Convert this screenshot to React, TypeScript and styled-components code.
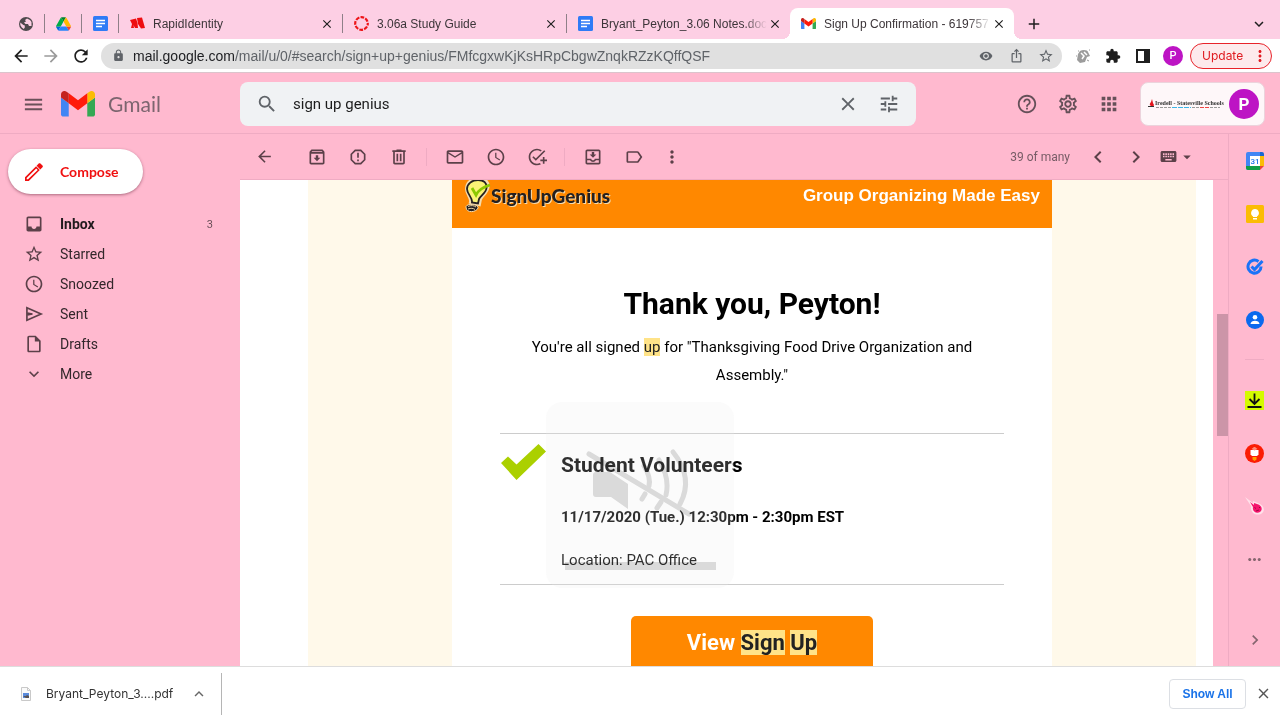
import React from "react";
import styled, { createGlobalStyle } from "styled-components";
import {
  MdAdd,
  MdAddTask,
  MdApps,
  MdArrowBack,
  MdArrowDropDown,
  MdArrowForward,
  MdChevronLeft,
  MdChevronRight,
  MdClose,
  MdExpandMore,
  MdExtension,
  MdHelpOutline,
  MdInbox,
  MdIosShare,
  MdKeyboard,
  MdKeyboardArrowUp,
  MdLock,
  MdMenu,
  MdMoreHoriz,
  MdMoreVert,
  MdOutlineArchive,
  MdOutlineEmail,
  MdOutlineInsertDriveFile,
  MdOutlineLabel,
  MdOutlineMoveToInbox,
  MdOutlineSettings,
  MdRefresh,
  MdRemoveRedEye,
  MdReportGmailerrorred,
  MdSchedule,
  MdSearch,
  MdStarBorder,
  MdTune,
} from "react-icons/md";

const color = {
  frame: "#fdcfe4",
  pink: "#ffb9cf",
  line: "#efabc3",
  icon: "#5c4049",
  grey: "#5f6368",
  text: "#33272b",
  orange: "#ff8800",
  cream: "#fff9ea",
  mark: "#ffe388",
  purple: "#bd14c4",
  red: "#f01010",
};

const ui = `Inter, "Liberation Sans", sans-serif`;
const arial = `"Liberation Sans", Arial, sans-serif`;
const roboto = `Roboto, "Liberation Sans", sans-serif`;

const GlobalStyle = createGlobalStyle`
  *, *::before, *::after { box-sizing: border-box; }
  body { margin: 0; font-family: ${roboto}; color: ${color.text}; }
  button { font: inherit; color: inherit; background: none; border: 0; padding: 0; cursor: pointer; }
  a { color: inherit; text-decoration: none; }
  svg { display: block; flex: none; }
  h1, h2, p, ul { margin: 0; padding: 0; }
  ul { list-style: none; }
`;

const Window = styled.div`
  position: relative;
  display: flex;
  flex-direction: column;
  height: 100vh;
  overflow: hidden;
  background: ${color.pink};
`;

/* ---------- browser chrome ---------- */

const TabStrip = styled.div`
  display: flex;
  align-items: flex-end;
  flex: none;
  padding: 8px 8px 0;
  background: ${color.frame};
  font-family: ${arial};
`;

const PinnedTab = styled.button`
  display: flex;
  align-items: center;
  justify-content: center;
  width: 36px;
  height: 31px;
  color: #4a4548;
`;

const Divider = styled.span`
  flex: none;
  width: 1px;
  height: 19px;
  align-self: center;
  background: #8f7f88;
`;

const Tab = styled.div<{ $active?: boolean }>`
  position: relative;
  display: flex;
  align-items: center;
  flex: 0 1 ${(p) => (p.$active ? 224 : 223)}px;
  min-width: 0;
  height: 31px;
  padding: 0 7px 0 11px;
  border-radius: 8px 8px 0 0;
  background: ${(p) => (p.$active ? "#fff" : "transparent")};
  color: #3c3539;
  &::before,
  &::after {
    content: ${(p) => (p.$active ? '""' : "none")};
    position: absolute;
    bottom: 0;
    width: 8px;
    height: 8px;
  }
  &::before {
    right: 100%;
    background: radial-gradient(circle at 0 0, transparent 8px, #fff 8px);
  }
  &::after {
    left: 100%;
    background: radial-gradient(circle at 100% 0, transparent 8px, #fff 8px);
  }
`;

const TabTitle = styled.span<{ $fade?: boolean }>`
  flex: 1;
  min-width: 0;
  margin-left: 8px;
  overflow: hidden;
  white-space: nowrap;
  font-size: 12px;
  line-height: 16px;
  mask-image: ${(p) => (p.$fade ? "linear-gradient(to right, #000 86%, transparent)" : "none")};
`;

const PlainButton = styled.button<{ $w: number; $tone?: string }>`
  display: flex;
  flex: none;
  align-items: center;
  justify-content: center;
  width: ${(p) => p.$w}px;
  height: 30px;
  color: ${(p) => p.$tone ?? "#1f1f1f"};
`;

const CloseTab = styled(PlainButton)`
  height: 16px;
`;

const Grow = styled.span`
  flex: 1;
`;

const AddressBar = styled.div`
  display: flex;
  align-items: center;
  flex: none;
  height: 34px;
  padding: 0 8px 0 5px;
  background: #fff;
  border-bottom: 1px solid #dbc4cc;
  font-family: ${ui};
`;

const UrlPill = styled.div`
  display: flex;
  align-items: center;
  flex: 1;
  min-width: 0;
  height: 26px;
  margin: 0 6px 0 5px;
  padding: 0 1px 0 11px;
  border-radius: 13px;
  background: #e0e0e0;
  color: ${color.grey};
`;

const Url = styled.span`
  flex: 1;
  min-width: 0;
  margin-left: 8px;
  overflow: hidden;
  white-space: nowrap;
  font-family: ${arial};
  font-size: 14px;
  line-height: 20px;
  b {
    font-weight: 400;
    color: #202124;
  }
`;

const Avatar = styled.button<{ $size: number }>`
  flex: none;
  width: ${(p) => p.$size}px;
  height: ${(p) => p.$size}px;
  border-radius: 50%;
  background: ${color.purple};
  color: #fff;
  font-family: ${roboto};
  font-weight: ${(p) => (p.$size > 24 ? 700 : 500)};
  font-size: ${(p) => (p.$size > 24 ? 17 : 11)}px;
  line-height: ${(p) => p.$size}px;
`;

const AvatarSlot = styled.span`
  display: flex;
  justify-content: center;
  flex: none;
  width: 30px;
`;

const Update = styled.button`
  display: flex;
  align-items: center;
  justify-content: space-between;
  flex: none;
  height: 26px;
  width: 82px;
  margin-left: 2px;
  padding: 0 2px 0 11px;
  border: 1px solid #e8232a;
  border-radius: 13px;
  background: #fdeaec;
  color: #e01a20;
  font-size: 12px;
`;

/* ---------- Gmail header ---------- */

const Header = styled.header`
  display: flex;
  align-items: center;
  flex: none;
  height: 61px;
  padding: 2px 15px 0 0;
  border-bottom: 1px solid ${color.line};
  color: ${color.grey};
`;

const Brand = styled.div`
  display: flex;
  align-items: center;
  flex: none;
  width: 240px;
  padding-left: 21px;
`;

const BrandLink = styled.a`
  display: flex;
  align-items: center;
  gap: 13px;
  margin-left: 16px;
  font-family: Lato, sans-serif;
  font-size: 21px;
  line-height: 28px;
  color: #7c656f;
`;

const SearchForm = styled.form`
  display: flex;
  align-items: center;
  flex: 0 1 676px;
  min-width: 0;
  height: 44px;
  padding: 0 6px;
  border-radius: 8px;
  background: #f0f2f4;
`;

const SearchInput = styled.input`
  flex: 1;
  min-width: 0;
  padding: 0 0 0 5px;
  border: 0;
  outline: 0;
  background: none;
  font-family: ${roboto};
  font-size: 15px;
  color: #1c1c1c;
`;

const Account = styled.div`
  display: flex;
  align-items: center;
  flex: none;
  justify-content: space-between;
  width: 125px;
  height: 44px;
  margin-left: 11px;
  padding: 0 5px 0 7px;
  border: 1px solid #ecd3dc;
  border-radius: 8px;
  background: #fef7f9;
`;

/* ---------- Gmail body ---------- */

const Body = styled.div`
  display: flex;
  flex: 1;
  min-height: 0;
`;

const Sidebar = styled.nav`
  flex: none;
  width: 240px;
  padding: 15px 27px 0 8px;
`;

const Compose = styled.button`
  display: flex;
  align-items: center;
  gap: 14px;
  width: 135px;
  height: 45px;
  padding-left: 14px;
  margin-bottom: 15px;
  border-radius: 23px;
  background: #fff;
  color: ${color.red};
  font-family: Lato, sans-serif;
  font-weight: 700;
  font-size: 14px;
  box-shadow: 0 1px 3px rgba(90, 30, 50, 0.5);
`;

const NavItem = styled.a<{ $bold?: boolean }>`
  display: flex;
  align-items: center;
  gap: 16px;
  height: 30px;
  padding-left: 16px;
  font-size: 14px;
  font-weight: ${(p) => (p.$bold ? 700 : 400)};
  color: ${(p) => (p.$bold ? "#211a1d" : color.text)};
  svg {
    color: ${color.icon};
  }
`;

const Count = styled.span`
  margin-left: auto;
  font-size: 11px;
  font-weight: 400;
  color: #6b5059;
`;

const Main = styled.main`
  display: flex;
  flex: 1;
  flex-direction: column;
  min-width: 0;
`;

const MailToolbar = styled.div`
  display: flex;
  align-items: center;
  flex: none;
  height: 46px;
  padding-right: 29px;
  border-bottom: 1px solid ${color.line};
  color: ${color.icon};
`;

const BackButton = styled(PlainButton)`
  margin-right: 8px;
`;

const ToolSeparator = styled.span`
  flex: none;
  width: 1px;
  height: 18px;
  margin: 0 7px;
  background: ${color.line};
`;

const Position = styled.span`
  font-size: 12px;
  color: #775c66;
  margin-right: 9px;
`;

const Reading = styled.div`
  display: flex;
  flex: 1;
  min-height: 0;
`;

const Message = styled.article`
  flex: 1;
  min-width: 0;
  overflow: hidden;
  padding: 0 17px 0 68px;
  background: #fff;
  color: #000;
`;

const Backdrop = styled.div`
  display: flex;
  justify-content: center;
  background: ${color.cream};
`;

const Letter = styled.div`
  width: 600px;
  background: #fff;
`;

const Banner = styled.div`
  display: flex;
  align-items: flex-start;
  justify-content: space-between;
  height: 48px;
  padding: 0 12px;
  background: ${color.orange};
`;

const Genius = styled.span`
  display: flex;
  font-family: Lato, sans-serif;
  font-weight: 900;
  font-size: 19px;
  line-height: 32px;
  color: #231f20;
  text-shadow: 1px 1px 0 #f5dcae;
`;

const Slogan = styled.span`
  font-family: ${arial};
  font-weight: 700;
  font-size: 17px;
  line-height: 32px;
  color: #fff;
`;

const Content = styled.div`
  display: flex;
  flex-direction: column;
  align-items: center;
  padding: 58px 48px 40px;
`;

const Thanks = styled.h1`
  font-size: 30px;
  line-height: 36px;
  font-weight: 700;
  margin-bottom: 11px;
`;

const Lead = styled.p`
  max-width: 480px;
  text-align: center;
  font-size: 15px;
  line-height: 28px;
  margin-bottom: 44px;
`;

const Mark = styled.mark`
  background: ${color.mark};
  color: #222;
`;

const Slot = styled.section`
  display: flex;
  align-self: stretch;
  gap: 15px;
  padding: 10px 0 12px;
  border: solid #ccc;
  border-width: 1px 0;
`;

const SlotText = styled.div`
  padding-top: 7px;
`;

const SlotTitle = styled.h2`
  font-size: 21px;
  line-height: 28px;
  font-weight: 700;
  margin-bottom: 26px;
`;

const SlotLine = styled.p<{ $bold?: boolean }>`
  font-size: 15px;
  line-height: 24px;
  font-weight: ${(p) => (p.$bold ? 700 : 400)};
  & + & {
    margin-top: 19px;
  }
`;

const ViewButton = styled.a`
  width: 242px;
  margin-top: 31px;
  border-radius: 5px;
  background: ${color.orange};
  color: #fff;
  font-size: 22px;
  font-weight: 700;
  line-height: 54px;
  text-align: center;
`;

const ScrollTrack = styled.div`
  display: flex;
  flex: none;
  justify-content: flex-end;
  width: 15px;
  padding-top: 134px;
`;

const ScrollThumb = styled.div`
  width: 11px;
  height: 122px;
  background: #cc95a8;
`;

const Rail = styled.aside`
  display: flex;
  flex: none;
  flex-direction: column;
  width: 52px;
  border-left: 1px solid ${color.line};
  color: #86656f;
`;

const RailButton = styled.button<{ $last?: boolean }>`
  display: flex;
  align-items: center;
  justify-content: center;
  height: 53px;
  margin-top: ${(p) => (p.$last ? "auto" : 0)};
`;

const RailRule = styled.hr`
  width: 19px;
  margin: 13px auto 14px;
  border: 0;
  border-top: 1px solid ${color.line};
`;

/* ---------- download shelf ---------- */

const Shelf = styled.footer`
  display: flex;
  align-items: center;
  flex: none;
  height: 54px;
  padding-left: 18px;
  border-top: 1px solid #ddd;
  background: #fff;
  font-family: ${ui};
`;

const Download = styled.button`
  display: flex;
  align-items: center;
  align-self: stretch;
  gap: 12px;
  padding-right: 4px;
  font-size: 12px;
  color: #333;
`;

const ShelfDivider = styled.span`
  width: 1px;
  height: 42px;
  background: #b5b5b5;
`;

const ShowAll = styled.button`
  width: 77px;
  height: 30px;
  border: 1px solid #dcdfe4;
  border-radius: 4px;
  color: #1a73e8;
  font-family: ${arial};
  font-size: 12px;
  font-weight: 700;
`;

/* ---------- volume display laid over the window ---------- */

const VolumeHud = styled.div`
  position: absolute;
  left: 50%;
  bottom: 132px;
  width: 188px;
  height: 186px;
  margin-left: -94px;
  border-radius: 16px;
  background: rgba(236, 236, 236, 0.2);
  pointer-events: none;
  svg {
    mix-blend-mode: multiply;
  }
`;

/* ---------- drawings ---------- */

const GlobeIcon = () => (
  <svg width="14" height="14" viewBox="0 0 14 14">
    <circle cx="7" cy="7" r="7" fill="#4f4a4d" />
    <path d="M1.300 5.500l3 2.500 1.500.5v2l-1 1.500-2-1.500L1.300 8zM8 1.500L6 3l1 1.500-2 1 1.500 1.500h2.500l1 2h2.500V5L11 3z" fill={color.frame} />
  </svg>
);

const DriveIcon = () => (
  <svg width="15" height="14" viewBox="0 0 87 78">
    <path fill="#0066da" d="m6.600 66.850 3.850 6.650c.8 1.400 1.950 2.500 3.300 3.300l13.750-23.800h-27.500c0 1.550.4 3.100 1.200 4.500z" />
    <path fill="#00ac47" d="m43.650 25-13.750-23.800c-1.350.8-2.500 1.900-3.300 3.300l-25.400 44a9.060 9.060 0 0 0-1.200 4.500h27.500z" />
    <path fill="#ea4335" d="m73.550 76.800c1.350-.8 2.500-1.900 3.300-3.300l1.600-2.750 7.650-13.250c.8-1.400 1.200-2.950 1.200-4.500h-27.500l5.850 11.500z" />
    <path fill="#00832d" d="m43.650 25 13.750-23.800c-1.350-.8-2.900-1.200-4.500-1.200h-18.500c-1.600 0-3.150.45-4.500 1.200z" />
    <path fill="#2684fc" d="m59.800 53h-32.300l-13.750 23.800c1.350.8 2.900 1.200 4.500 1.200h50.800c1.600 0 3.150-.45 4.500-1.200z" />
    <path fill="#ffba00" d="m73.400 26.500-12.700-22c-.8-1.400-1.950-2.500-3.300-3.300l-13.750 23.800 16.150 28h27.450c0-1.550-.4-3.100-1.200-4.500z" />
  </svg>
);

const DocsIcon = () => (
  <svg width="15" height="15" viewBox="0 0 15 15">
    <rect width="15" height="15" rx="1.500" fill="#2f7bf6" />
    <path d="M3 4.500h9M3 7.500h9M3 10.500h6" stroke="#fff" strokeWidth="1.500" />
  </svg>
);

const RapidIcon = () => (
  <svg width="15" height="15" viewBox="0 0 15 15" fill="#ee0d10">
    <path d="M0 4l6-1.500L7.500 7l.5 5H5L3.500 9 4 12H1L2 8z" />
    <path d="M7 2l5-.5L15 12l-4 .5L8 8z" />
  </svg>
);

const CanvasIcon = () => (
  <svg width="15" height="15" viewBox="0 0 15 15" fill="none">
    <circle cx="7.500" cy="7.500" r="6.300" stroke="#ee1418" strokeWidth="2.200" strokeDasharray="3.750 1.200" strokeDashoffset="1.800" />
  </svg>
);

const GmailIcon = ({ width }: { width: number }) => (
  <svg width={width} height={(width * 3) / 4} viewBox="52 42 88 66">
    <path fill="#4285f4" d="M58 108h14V74L52 59v43c0 3.320 2.690 6 6 6" />
    <path fill="#34a853" d="M120 108h14c3.320 0 6-2.690 6-6V59l-20 15" />
    <path fill="#fbbc04" d="M120 48v26l20-15v-8c0-7.420-8.470-11.650-14.400-7.200" />
    <path fill="#ff1a0a" d="M72 74V48l24 18 24-18v26L96 92" />
    <path fill="#c5221f" d="M52 51v8l20 15V48l-5.600-4.200c-5.940-4.450-14.400-.22-14.400 7.200" />
  </svg>
);

const SidePanelIcon = () => (
  <svg width="14" height="14" viewBox="0 0 14 14">
    <path fill="#1f1f1f" fillRule="evenodd" d="M0 0h14v14H0zM2 2v10h6V2z" />
  </svg>
);

const HelperIcon = () => (
  <svg width="16" height="16" viewBox="0 0 16 16" fill="none">
    <path d="M5 3c3-2 8-1 8 1l2 4-3 1-2 5-5 1-3-3 1-6z" fill="#9c9c9c" />
    <path d="M6 5l3 3-2 3M9 4l3 3" stroke="#fff" strokeWidth="1.500" />
    <path d="M1 8h1M3 3h1M12 12l2 1M14 2h1" stroke="#999" />
  </svg>
);

const PencilIcon = () => (
  <svg width="24" height="24" viewBox="0 0 24 24" fill={color.red}>
    <path fillRule="evenodd" d="M3 17.200 14.100 6.200l3.700 3.700L6.800 21H3zm1.700.8v1.300H6l9.700-9.400-1.500-1.500z" />
    <path d="m14.600 5.700 2.100-2.200c.5-.5 1.200-.5 1.700 0l2.100 2.100c.5.500.5 1.200 0 1.700L18.300 9.400z" />
  </svg>
);

const TrashIcon = ({ size }: { size: number }) => (
  <svg width={size} height={size} viewBox="0 0 24 24" fill="currentColor">
    <path fillRule="evenodd" d="M15 4V3H9v1H4v2h1v13c0 1.100.9 2 2 2h10c1.100 0 2-.9 2-2V6h1V4zm2 15H7V6h10zM9 8h2v9H9zm4 0h2v9h-2z" />
  </svg>
);

const SendIcon = ({ size }: { size: number }) => (
  <svg width={size} height={size} viewBox="0 0 24 24" fill="none" stroke="currentColor" strokeWidth="2">
    <path d="M3.500 4.500 20.500 12 3.500 19.500z" />
    <path d="M4 10.500 11 12 4 13.500z" fill="currentColor" stroke="none" />
    <path d="M4 11l6 1-6 1" />
  </svg>
);

const DistrictLogo = () => (
  <svg width="76" height="14" viewBox="0 0 76 14" role="img" aria-label="Iredell - Statesville Schools">
    <path d="M3 9C1 8 2 6 3 5l1-3 1 4 1 2-1 2z" fill="#e3151d" />
    <path d="M0 9.500h6" stroke="#333" />
    <text x="7" y="8" fontFamily="Liberation Serif" fontWeight="700" fontSize="6" fill="#333">
      Iredell - Statesville Schools
    </text>
    <path d="M8 10.500h15M44 10.500h8M62 10.500h10" stroke="#999" strokeDasharray="3 1" />
    <path d="M24 10.500h19" stroke="#3cb4e6" strokeDasharray="5 1" />
    <path d="M52 10.500h10" stroke="#e44" strokeDasharray="4 1" />
  </svg>
);

const BulbLogo = () => (
  <svg width="27" height="34" viewBox="0 0 27 34">
    <path d="M14-1c7 0 10 3 9.500 8S18 15 16 19l-1 5-8-2c1-4-4-8-4-13C3 3 8-1 14-1z" fill="#fbf08a" stroke="#f5dcae" strokeWidth="4" />
    <path d="M14 0c6 0 9 3 8.500 8S17 15 15 19l-1 4.500-6-1C9 18 3 14 3 9s5-9 11-9z" fill="#fbf376" stroke="#231f20" strokeWidth="1.800" />
    <path d="M8 8l4 7c2-4 7-8 14-10" fill="none" stroke="#8cc800" strokeWidth="2.800" />
    <path d="M2 27c0-4 13-3 12 1s-12 6-12-1z" fill="#231f20" stroke="#f5dcae" strokeWidth="1" />
    <path d="M4 26.500c3-1.500 6-1 8 .5M4 29c3-1 5-1 7 .5" fill="none" stroke="#e8cfa0" />
  </svg>
);

const CheckDrawing = () => (
  <svg width="46" height="36" viewBox="0 0 46 36">
    <path d="M1 19l7-6.500 8.500 8L38.500 0 46 7.500 16.500 36z" fill="#abd000" />
  </svg>
);

const CalendarIcon = () => (
  <svg width="18" height="18" viewBox="0 0 18 18">
    <path d="M2 0h12v18H2a2 2 0 0 1-2-2V2a2 2 0 0 1 2-2z" fill="#4285f4" />
    <path d="M14 0h2a2 2 0 0 1 2 2v2h-4z" fill="#1967d2" />
    <path d="M14 4h4v10h-4z" fill="#fbbc04" />
    <path d="M0 14h14v4H2a2 2 0 0 1-2-2z" fill="#0f9d46" />
    <path d="M14 14h4l-4 4z" fill="#ea4335" />
    <path d="M4 4h10v10H4z" fill="#fff" />
    <text x="9" y="12" textAnchor="middle" fontFamily="Roboto" fontWeight="500" fontSize="8" fill="#1a73e8">31</text>
  </svg>
);

const KeepIcon = () => (
  <svg width="18" height="18" viewBox="0 0 18 18">
    <rect width="18" height="18" rx="1.500" fill="#fbbc04" />
    <path d="M9 4a4 4 0 0 0-2 7.400V12h4v-.6A4 4 0 0 0 9 4zM7 13h4v1.500H7z" fill="#fff" />
  </svg>
);

const TasksIcon = () => (
  <svg width="18" height="18" viewBox="0 0 18 18" fill="none" stroke="#1a73f8" strokeWidth="3">
    <path d="M12.500 3.500A6.500 6.500 0 1 0 15 8.500" />
    <path d="M5.500 8.500l3 3L16.500 3" />
  </svg>
);

const ContactsIcon = () => (
  <svg width="18" height="18" viewBox="0 0 18 18">
    <circle cx="9" cy="9" r="9" fill="#0b69ee" />
    <circle cx="9" cy="6.300" r="2.300" fill="#fff" />
    <path d="M4.500 13c0-4.500 9-4.500 9 0z" fill="#fff" />
  </svg>
);

const SaveIcon = () => (
  <svg width="19" height="19" viewBox="0 0 19 19">
    <path d="M0 0h19v19H0z" fill="#d4fb00" />
    <path d="M9.500 2.500v10M4.500 8l5 5 5-5M2.500 16h14" fill="none" stroke="#111" strokeWidth="1.800" />
  </svg>
);

const TorchIcon = () => (
  <svg width="19" height="19" viewBox="0 0 19 19">
    <circle cx="9.500" cy="9.500" r="9.500" fill="#fb1c04" />
    <path d="M5.500 6h8v4.500L12 12H7l-1.500-1.500z" fill="#fff" />
    <path d="M6.500 5l2.500-2h1l2.500 2-3 1.500z" fill="#ff8a78" />
    <path d="M7.500 13h4v2.500l-2 1.500-2-1.500z" fill="#ff9d00" />
  </svg>
);

const CometIcon = () => (
  <svg width="19" height="19" viewBox="0 0 19 19">
    <path d="M0 0l6 9c-1 7 5 10 10 8 5-3 3-9-3-11L8 4v2z" fill="#ffe1ea" />
    <path d="M5 5l3 5c-1 5 4 7 7 5s2-7-3-8L9 6v2z" fill="#f5146c" />
    <path d="M9.500 10.500l1.500 1M14 10l1 1M11 14l3-1" stroke="#9b0a45" />
  </svg>
);

const PdfIcon = () => (
  <svg width="16" height="16" viewBox="0 0 16 16">
    <path d="M3.500 1.500h6l3 3v10h-9z" fill="#fafafa" stroke="#c9c9c9" />
    <path d="M9.500 1.500v3h3" fill="none" stroke="#c9c9c9" />
    <path d="M5 7h6v5H5z" fill="#5a8bdc" />
    <path d="M5 10h3l1-1 2 1v2H8z" fill="#5b5350" />
  </svg>
);

const MutedSpeaker = () => (
  <svg width="188" height="186" viewBox="0 0 188 186" fill="none" stroke="#dedede" strokeWidth="5" strokeLinecap="round">
    <path d="M47 73q0-3 3-3h14l18 12v25L65 95H50q-3 0-3-3z" fill="#dedede" stroke="none" />
    <path d="M43 52L143 112" />
    <path d="M98 64q7 11 5 20M99 92l-3 5" />
    <path d="M113 58q11 18 7 35M115 100l-4 6" />
    <path d="M127 50q21 26 7 52" />
    <path d="M19 160h151v8H19z" fill="#dedede" stroke="none" />
  </svg>
);

/* ---------- data ---------- */

const tabs = [
  { title: "RapidIdentity", icon: <RapidIcon /> },
  { title: "3.06a Study Guide", icon: <CanvasIcon /> },
  { title: "Bryant_Peyton_3.06 Notes.doc", icon: <DocsIcon />, fade: true },
  { title: "Sign Up Confirmation - 619757", icon: <GmailIcon width={15} />, fade: true, active: true },
];

const folders = [
  { label: "Inbox", icon: MdInbox, count: 3 },
  { label: "Starred", icon: MdStarBorder },
  { label: "Snoozed", icon: MdSchedule },
  { label: "Sent", icon: SendIcon },
  { label: "Drafts", icon: MdOutlineInsertDriveFile },
  { label: "More", icon: MdExpandMore },
];

const toolGroups = [
  [
    { label: "Archive", icon: MdOutlineArchive },
    { label: "Report spam", icon: MdReportGmailerrorred },
    { label: "Delete", icon: TrashIcon },
  ],
  [
    { label: "Mark as unread", icon: MdOutlineEmail },
    { label: "Snooze", icon: MdSchedule },
    { label: "Add to tasks", icon: MdAddTask },
  ],
  [
    { label: "Move to", icon: MdOutlineMoveToInbox },
    { label: "Labels", icon: MdOutlineLabel },
  ],
];

const apps = [
  { label: "Calendar", icon: <CalendarIcon /> },
  { label: "Keep", icon: <KeepIcon /> },
  { label: "Tasks", icon: <TasksIcon /> },
  { label: "Contacts", icon: <ContactsIcon /> },
];

const addOns = [
  { label: "Save emails", icon: <SaveIcon /> },
  { label: "Torch", icon: <TorchIcon /> },
  { label: "Comet", icon: <CometIcon /> },
  { label: "More add-ons", icon: <MdMoreHoriz size={19} /> },
];

export default function App() {
  return (
    <Window>
      <GlobalStyle />

      <TabStrip>
        <PinnedTab aria-label="Web page"><GlobeIcon /></PinnedTab>
        <Divider />
        <PinnedTab aria-label="Drive"><DriveIcon /></PinnedTab>
        <Divider />
        <PinnedTab aria-label="Docs"><DocsIcon /></PinnedTab>
        {tabs.map((t, i) => (
          <React.Fragment key={t.title}>
            {!t.active && <Divider />}
            <Tab $active={t.active}>
              {t.icon}
              <TabTitle $fade={t.fade}>{t.title}</TabTitle>
              <CloseTab $w={16} aria-label={`Close tab ${i + 1}`}><MdClose size={14} /></CloseTab>
            </Tab>
          </React.Fragment>
        ))}
        <PlainButton $w={40} aria-label="New tab"><MdAdd size={18} /></PlainButton>
        <Grow />
        <PlainButton $w={26} aria-label="Search tabs"><MdExpandMore size={18} /></PlainButton>
      </TabStrip>

      <AddressBar>
        <PlainButton $w={31} aria-label="Back"><MdArrowBack size={20} /></PlainButton>
        <PlainButton $w={30} $tone="#9a9a9a" aria-label="Forward"><MdArrowForward size={20} /></PlainButton>
        <PlainButton $w={30} aria-label="Reload"><MdRefresh size={20} /></PlainButton>
        <UrlPill>
          <MdLock size={13} />
          <Url><b>mail.google.com</b>/mail/u/0/#search/sign+up+genius/FMfcgxwKjKsHRpCbgwZnqkRZzKQffQSF</Url>
          <PlainButton $w={30} $tone={color.grey} aria-label="View site"><MdRemoveRedEye size={14} /></PlainButton>
          <PlainButton $w={30} $tone={color.grey} aria-label="Share"><MdIosShare size={15} /></PlainButton>
          <PlainButton $w={30} $tone={color.grey} aria-label="Bookmark"><MdStarBorder size={16} /></PlainButton>
        </UrlPill>
        <PlainButton $w={30} aria-label="Helper extension"><HelperIcon /></PlainButton>
        <PlainButton $w={30} aria-label="Extensions"><MdExtension size={16} /></PlainButton>
        <PlainButton $w={30} aria-label="Side panel"><SidePanelIcon /></PlainButton>
        <AvatarSlot><Avatar $size={20}>P</Avatar></AvatarSlot>
        <Update>Update<MdMoreVert size={18} /></Update>
      </AddressBar>

      <Header>
        <Brand>
          <PlainButton $w={24} $tone="#6b5059" aria-label="Main menu"><MdMenu size={23} /></PlainButton>
          <BrandLink href="#gmail"><GmailIcon width={34} />Gmail</BrandLink>
        </Brand>
        <SearchForm onSubmit={(e) => e.preventDefault()}>
          <PlainButton $w={42} $tone={color.grey} aria-label="Search"><MdSearch size={22} /></PlainButton>
          <SearchInput aria-label="Search mail" defaultValue="sign up genius" />
          <PlainButton $w={41} $tone={color.grey} type="button" aria-label="Clear search"><MdClose size={22} /></PlainButton>
          <PlainButton $w={42} $tone={color.grey} type="button" aria-label="Search options"><MdTune size={22} /></PlainButton>
        </SearchForm>
        <Grow />
        <PlainButton $w={41} $tone="#665059" aria-label="Support"><MdHelpOutline size={22} /></PlainButton>
        <PlainButton $w={41} $tone="#665059" aria-label="Settings"><MdOutlineSettings size={22} /></PlainButton>
        <PlainButton $w={41} $tone="#665059" aria-label="Google apps"><MdApps size={22} /></PlainButton>
        <Account>
          <DistrictLogo />
          <Avatar $size={30}>P</Avatar>
        </Account>
      </Header>

      <Body>
        <Sidebar>
          <Compose><PencilIcon />Compose</Compose>
          <ul>
            {folders.map(({ label, icon: Icon, count }) => (
              <li key={label}>
                <NavItem href={`#${label.toLowerCase()}`} $bold={!!count}>
                  <Icon size={20} />
                  {label}
                  {count && <Count>{count}</Count>}
                </NavItem>
              </li>
            ))}
          </ul>
        </Sidebar>

        <Main>
          <MailToolbar>
            <BackButton $w={48} $tone={color.icon} aria-label="Back to results"><MdArrowBack size={19} /></BackButton>
            {toolGroups.map((group, i) => (
              <React.Fragment key={i}>
                {i > 0 && <ToolSeparator />}
                {group.map(({ label, icon: Icon }) => (
                  <PlainButton key={label} $w={41} $tone={color.icon} aria-label={label}><Icon size={20} /></PlainButton>
                ))}
              </React.Fragment>
            ))}
            <PlainButton $w={36} $tone={color.icon} aria-label="More"><MdMoreVert size={20} /></PlainButton>
            <Grow />
            <Position>39 of many</Position>
            <PlainButton $w={38} $tone={color.icon} aria-label="Newer"><MdChevronLeft size={24} /></PlainButton>
            <PlainButton $w={38} $tone={color.icon} aria-label="Older"><MdChevronRight size={24} /></PlainButton>
            <PlainButton $w={44} $tone={color.icon} aria-label="Input tools"><MdKeyboard size={19} /><MdArrowDropDown size={18} /></PlainButton>
          </MailToolbar>

          <Reading>
            <Message>
              <Backdrop>
                <Letter>
                  <Banner>
                    <Genius><BulbLogo />SignUpGenius</Genius>
                    <Slogan>Group Organizing Made Easy</Slogan>
                  </Banner>
                  <Content>
                    <Thanks>Thank you, Peyton!</Thanks>
                    <Lead>
                      You're all signed <Mark>up</Mark> for "Thanksgiving Food Drive Organization and Assembly."
                    </Lead>
                    <Slot>
                      <CheckDrawing />
                      <SlotText>
                        <SlotTitle>Student Volunteers</SlotTitle>
                        <SlotLine $bold>11/17/2020 (Tue.) 12:30pm - 2:30pm EST</SlotLine>
                        <SlotLine>Location: PAC Office</SlotLine>
                      </SlotText>
                    </Slot>
                    <ViewButton href="#view">View <Mark>Sign</Mark> <Mark>Up</Mark></ViewButton>
                  </Content>
                </Letter>
              </Backdrop>
            </Message>
            <ScrollTrack><ScrollThumb /></ScrollTrack>
          </Reading>
        </Main>

        <Rail>
          {apps.map((a) => (
            <RailButton key={a.label} aria-label={a.label}>{a.icon}</RailButton>
          ))}
          <RailRule />
          {addOns.map((a) => (
            <RailButton key={a.label} aria-label={a.label}>{a.icon}</RailButton>
          ))}
          <RailButton $last aria-label="Hide side panel"><MdChevronRight size={20} /></RailButton>
        </Rail>
      </Body>

      <Shelf>
        <Download><PdfIcon />Bryant_Peyton_3....pdf</Download>
        <PlainButton $w={44} $tone="#666" aria-label="Download options"><MdKeyboardArrowUp size={18} /></PlainButton>
        <ShelfDivider />
        <Grow />
        <ShowAll>Show All</ShowAll>
        <PlainButton $w={34} $tone="#555" aria-label="Close downloads"><MdClose size={17} /></PlainButton>
      </Shelf>

      <VolumeHud><MutedSpeaker /></VolumeHud>
    </Window>
  );
}
